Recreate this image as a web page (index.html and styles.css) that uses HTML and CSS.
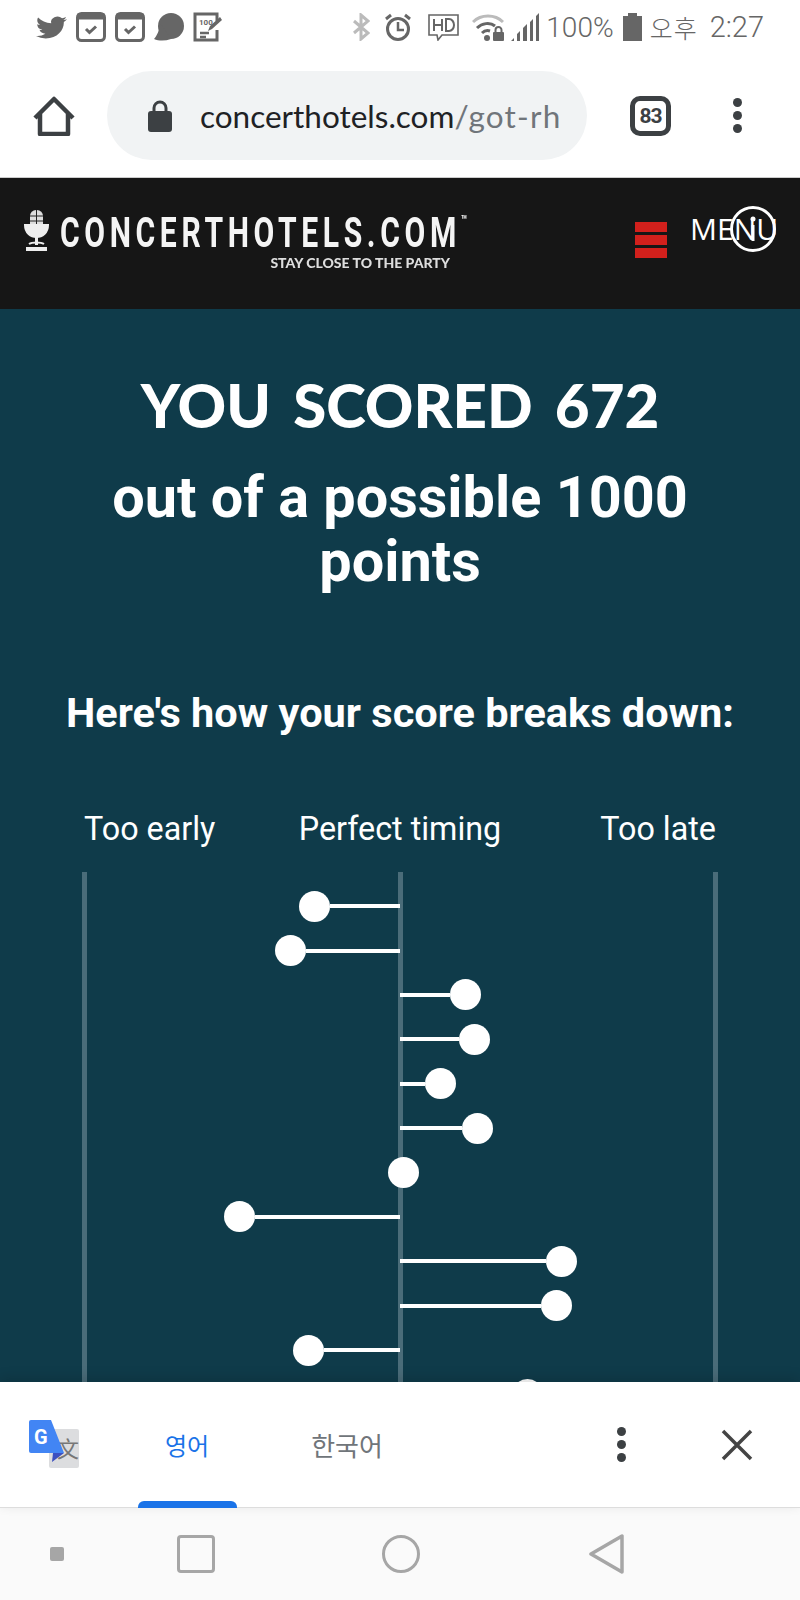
FILE: index.html

```html
<!DOCTYPE html>
<html lang="en">
<head>
  <meta charset="UTF-8" />
  <meta name="viewport" content="width=device-width, initial-scale=1.0" />
  <title>You scored 672</title>
  <link rel="stylesheet" href="styles.css">
</head>
<body>
  <div class="status-bar">
    <div class="status-left">
      <svg width="31" height="27" viewBox="0 0 24 24" preserveAspectRatio="none" fill="#666"><path d="M23.95 4.57a10 10 0 0 1-2.82.77 4.96 4.96 0 0 0 2.16-2.72c-.95.55-2 .96-3.12 1.19a4.92 4.92 0 0 0-8.38 4.48C7.69 8.1 4.07 6.13 1.64 3.16a4.82 4.82 0 0 0-.66 2.48c0 1.71.87 3.22 2.19 4.1a4.9 4.9 0 0 1-2.23-.61v.06a4.92 4.92 0 0 0 3.95 4.83 4.9 4.9 0 0 1-2.21.08 4.93 4.93 0 0 0 4.6 3.42A9.87 9.87 0 0 1 0 19.54a13.94 13.94 0 0 0 7.55 2.21c9.05 0 14-7.5 14-13.98 0-.21 0-.42-.02-.63a9.94 9.94 0 0 0 2.46-2.55z"/></svg>
      <svg width="30" height="30" viewBox="0 0 30 30"><rect x="1.5" y="1.5" width="27" height="27" rx="4" fill="#fff" stroke="#666" stroke-width="3"/><rect x="1.5" y="1.5" width="27" height="6" fill="#666"/><path d="M10 17l3.5 3.5 6.5-6" fill="none" stroke="#666" stroke-width="3"/></svg>
      <svg width="30" height="30" viewBox="0 0 30 30"><rect x="1.5" y="1.5" width="27" height="27" rx="4" fill="#fff" stroke="#666" stroke-width="3"/><rect x="1.5" y="1.5" width="27" height="6" fill="#666"/><path d="M10 17l3.5 3.5 6.5-6" fill="none" stroke="#666" stroke-width="3"/></svg>
      <svg width="30" height="28" viewBox="0 0 30 28" fill="#666"><circle cx="17" cy="13" r="13"/><path d="M0 26c3-3 5-9 7-15l10 15c-6 2-12 2-17 0z"/></svg>
      <svg width="30" height="30" viewBox="0 0 30 30" fill="none" stroke="#666"><path d="M24 9V2H2v26h22V18" stroke-width="3"/><path d="M7 21h9M7 25h6" stroke-width="2.5"/><path d="M15 19l2-5 10-9 2 3-10 9z" fill="#666" stroke="none"/><text x="6" y="13" class="note-text">100</text></svg>
    </div>
    <div class="status-right">
      <svg class="ic-bt" width="17" height="28" viewBox="0 0 17 28" fill="none" stroke="#bbb" stroke-width="3"><path d="M1 8l14 12-7 6V2l7 6L1 20"/></svg>
      <svg class="ic-alarm" width="26" height="28" viewBox="0 0 26 28" fill="none" stroke="#666"><circle cx="13" cy="16" r="10.5" stroke-width="3"/><path d="M13 9v8h6" stroke-width="2.5"/><path d="M1 6l5-4M25 6l-5-4" stroke-width="3"/></svg>
      <svg class="ic-hd" width="31" height="27" viewBox="0 0 31 27" fill="none" stroke="#666" stroke-width="1.6"><path d="M1 1h29v20H14l-4 5-1-5H1z"/><path d="M6 5v12M6 11h8M14 5v12M18 5v12h3a5 6 0 0 0 0-12z" stroke-width="2"/></svg>
      <svg class="ic-wifi" width="32" height="28" viewBox="0 0 32 28" fill="none"><path d="M1 9c8-8 22-8 30 0" stroke="#bbb" stroke-width="3"/><path d="M5 15c5-5 13-6 18-2" stroke="#666" stroke-width="3"/><path d="M10 20c2-2 5-3 8-2" stroke="#666" stroke-width="3"/><circle cx="15" cy="25" r="3" fill="#666"/><rect x="21" y="19" width="11" height="9" rx="1" fill="#666"/><path d="M23.500 19v-2a3 3 0 0 1 6 0v2" stroke="#666" stroke-width="2"/></svg>
      <svg class="ic-signal" width="28" height="28" viewBox="0 0 28 28" fill="#666"><path d="M0 28l3-3v3zM6 28v-7l3-3v10zM12 28V15l4-4v17zM19 28V9l3-3v22zM25 28V3l3-3v28z"/></svg>
      <span class="batt-text">100%</span>
      <svg class="ic-batt" width="19" height="28" viewBox="0 0 19 28" fill="#666"><path d="M5 0h9v3h5v25H0V3h5z"/></svg>
      <span class="ampm">오후</span>
      <span class="clock">2:27</span>
    </div>
  </div>

  <div class="url-bar">
    <svg width="42" height="40" viewBox="0 0 42 40" fill="none" stroke="#3c4043" stroke-width="4.5" stroke-linejoin="round"><path d="M2 22L21 3l19 19"/><path d="M7 18v20h28V18"/></svg>
    <div class="url-pill">
      <svg width="24" height="32" viewBox="0 0 24 32"><path d="M6 13V8a6 6 0 0 1 12 0v5" fill="none" stroke="#3c4043" stroke-width="3"/><rect y="11" width="24" height="21" rx="3" fill="#3c4043"/></svg>
      <div class="url-text">concerthotels.com<span class="url-path">/got-rh</span></div>
    </div>
    <div class="tab-count">83</div>
    <div class="dots"><i></i><i></i><i></i></div>
  </div>

  <div class="site-header">
    <div class="logo">
      <svg width="27" height="43" viewBox="0 0 27 43" fill="none" stroke="#eee"><rect x="7" y="1" width="13" height="20" rx="6" fill="#ddd" stroke="none"/><path d="M7 7h13M7 12h13M13.500 1v18" stroke="#222" stroke-width="1"/><path d="M2 16c0 16 23 16 23 0z" fill="#eee" stroke-width="2"/><path d="M13.500 28v8" stroke-width="3"/><path d="M6 35c3-2 12-2 15 0" stroke-width="2"/><path d="M3 40h21" stroke-width="4"/></svg>
      <div class="logo-words">
        <div class="logo-name">CONCERTHOTELS.COM<sup class="logo-tm">™</sup></div>
        <div class="logo-tag">STAY CLOSE TO THE PARTY</div>
      </div>
    </div>
    <div class="nav-toggle">
      <div class="burger"><i></i><i></i><i></i></div>
      <div class="menu-word">MENU
        <svg class="menu-ring" width="48" height="48" viewBox="0 0 48 48" fill="none" stroke="#fff"><circle cx="24" cy="24" r="21.500" stroke-width="3"/><path d="M24 20v16" stroke-width="3"/><circle cx="24" cy="14" r="2.500" fill="#fff" stroke="none"/></svg>
      </div>
    </div>
  </div>

  <div class="results">
    <h1 class="score-title">YOU SCORED 672</h1>
    <h2 class="score-sub">out of a possible 1000 points</h2>
    <h3 class="breakdown">Here's how your score breaks down:</h3>
    <div class="chart-labels">
      <span>Too early</span>
      <span>Perfect timing</span>
      <span>Too late</span>
    </div>
    <div class="chart">
      <div class="row" style="margin-left:216.5px"><i class="dot"></i><i class="stem" style="width:70.5px"></i></div>
      <div class="row" style="margin-left:192.5px"><i class="dot"></i><i class="stem" style="width:94.5px"></i></div>
      <div class="row" style="margin-left:318px"><i class="stem" style="width:50px"></i><i class="dot"></i></div>
      <div class="row" style="margin-left:318px"><i class="stem" style="width:58.5px"></i><i class="dot"></i></div>
      <div class="row" style="margin-left:318px"><i class="stem" style="width:24.5px"></i><i class="dot"></i></div>
      <div class="row" style="margin-left:318px"><i class="stem" style="width:62px"></i><i class="dot"></i></div>
      <div class="row" style="margin-left:305.5px"><i class="dot"></i></div>
      <div class="row" style="margin-left:141.5px"><i class="dot"></i><i class="stem" style="width:145.5px"></i></div>
      <div class="row" style="margin-left:318px"><i class="stem" style="width:145.5px"></i><i class="dot"></i></div>
      <div class="row" style="margin-left:318px"><i class="stem" style="width:140.5px"></i><i class="dot"></i></div>
      <div class="row" style="margin-left:210.5px"><i class="dot"></i><i class="stem" style="width:76.5px"></i></div>
      <div class="row" style="margin-left:318px"><i class="stem" style="width:111.5px"></i><i class="dot"></i></div>
    </div>
  </div>

  <div class="translate-bar">
    <svg class="translate-logo" width="50" height="49" viewBox="0 0 50 49"><rect x="20" y="9" width="30" height="39" rx="2" fill="#dcdddf"/><text x="28" y="37" class="translate-zh">文</text><path d="M2 0h20l13 33H2a2 2 0 0 1-2-2V2a2 2 0 0 1 2-2z" fill="#4285f4"/><path d="M24 33h11l-12 9z" fill="#3b4fc0"/><text x="5" y="24" class="translate-g">G</text></svg>
    <div class="lang lang-on">영어</div>
    <div class="lang">한국어</div>
    <div class="dots dots-small"><i></i><i></i><i></i></div>
    <svg class="translate-close" width="32" height="32" viewBox="0 0 32 32" stroke="#444" stroke-width="3.500"><path d="M2 2l28 28M30 2L2 30"/></svg>
  </div>

  <div class="nav-bar">
    <i class="nav-dot"></i>
    <i class="nav-square"></i>
    <i class="nav-circle"></i>
    <svg width="36" height="40" viewBox="0 0 36 40" fill="none" stroke="#a6a6a6" stroke-width="3.500" stroke-linejoin="round"><path d="M33 2v36L2 20z"/></svg>
  </div>
</body>
</html>
```

FILE: styles.css

```css
* {
  box-sizing: border-box;
}
body {
  margin: 0;
  width: 800px;
  height: 1600px;
  overflow: hidden;
  display: flex;
  flex-direction: column;
  font-family: Roboto, sans-serif;
  background: #fff;
}
i {
  display: block;
}

/* phone status bar */
.status-bar {
  height: 54px;
  flex: none;
  display: flex;
  justify-content: space-between;
  align-items: center;
  padding: 0 36px;
  color: #666;
}
.status-left, .status-right {
  display: flex;
  align-items: center;
}
.status-left {
  gap: 9px;
}
.status-right {
  gap: 0;
  font-weight: 300;
}
.note-text {
  font: bold 8px Roboto, sans-serif;
  fill: #666;
  stroke: none;
}
.ic-alarm { margin-left: 15px; }
.ic-hd { margin-left: 17px; }
.ic-wifi { margin-left: 13px; }
.ic-signal { margin-left: 7px; }
.batt-text {
  margin-left: 7px;
  font-size: 28px;
  font-family: Roboto, sans-serif;
}
.ic-batt { margin-left: 9px; }
.ampm {
  margin-left: 8px;
  font-size: 25px;
  letter-spacing: 1px;
  font-family: "Noto Sans CJK KR", sans-serif;
}
.clock {
  margin-left: 12px;
  font-size: 29px;
}

/* browser toolbar */
.url-bar {
  height: 124px;
  flex: none;
  display: flex;
  align-items: center;
  padding: 0 0 0 33px;
  border-bottom: 1px solid #ccc;
}
.url-pill {
  width: 480px;
  height: 89px;
  margin-left: 32px;
  padding-left: 41px;
  border-radius: 45px;
  background: #f1f3f4;
  display: flex;
  align-items: center;
  overflow: hidden;
}
.url-text {
  margin-left: 28px;
  font-family: Lato, sans-serif;
  font-size: 31.5px;
  color: #202124;
  white-space: nowrap;
  width: 365px;
  overflow: hidden;
}
.url-path {
  color: #70757a;
  letter-spacing: 1.2px;
}
.tab-count {
  width: 41px;
  height: 40px;
  margin-left: 43px;
  border: 5px solid #3c4043;
  border-radius: 10px;
  text-align: center;
  font-size: 21px;
  font-weight: 700;
  line-height: 30px;
  color: #3c4043;
  letter-spacing: -1px;
}
.dots {
  margin-left: 62px;
  display: flex;
  flex-direction: column;
  gap: 4px;
}
.dots i {
  width: 9px;
  height: 9px;
  border-radius: 50%;
  background: #3c4043;
}

/* concerthotels header */
.site-header {
  height: 131px;
  flex: none;
  background: #161616;
  display: flex;
  justify-content: space-between;
  padding: 31px 0 0 23px;
}
.logo {
  display: flex;
  align-items: flex-start;
  gap: 10px;
}
.logo-words {
  width: 390px;
  display: flex;
  flex-direction: column;
  align-items: flex-end;
  filter: blur(0.4px);
}
.logo-name {
  align-self: flex-start;
  transform: scaleX(0.7);
  transform-origin: left top;
  margin-top: 3px;
  font-weight: 700;
  font-size: 43px;
  line-height: 40px;
  letter-spacing: 6.6px;
  color: #f4f4f4;
  white-space: nowrap;
}
.logo-tm {
  font-size: 14px;
  letter-spacing: 0;
  vertical-align: 22px;
  line-height: 0;
}
.logo-tag {
  margin-top: 4px;
  font-family: Lato, sans-serif;
  font-weight: 900;
  font-size: 14px;
  line-height: 14px;
  color: #ddd;
}
.nav-toggle {
  display: flex;
  align-items: flex-start;
  margin-right: 23px;
  gap: 23px;
}
.burger {
  margin-top: 13px;
  width: 32px;
  display: flex;
  flex-direction: column;
  gap: 3px;
}
.burger i {
  height: 10px;
  background: #d2201c;
}
.menu-word {
  position: relative;
  font-family: "Open Sans", sans-serif;
  font-size: 30px;
  line-height: 40px;
  color: #fff;
  width: 87px;
  white-space: nowrap;
}
.menu-ring {
  position: absolute;
  left: 39px;
  top: -4px;
}

/* results */
.results {
  flex: 1;
  min-height: 0;
  overflow: hidden;
  background: #0f3b4a;
  color: #fff;
  text-align: center;
}
.score-title {
  margin: 56px 0 0;
  font-family: Lato, sans-serif;
  font-weight: 900;
  font-size: 60px;
  line-height: 80px;
  word-spacing: 8px;
}
.score-sub {
  margin: 21px 80px 0;
  font-size: 57.6px;
  font-weight: 700;
  line-height: 64px;
}
.breakdown {
  margin: 94px 0 0;
  font-size: 41.5px;
  font-weight: 700;
  line-height: 50px;
}
.chart-labels {
  margin: 71px 84px 0;
  display: grid;
  grid-template-columns: 1fr auto 1fr;
  font-size: 32.3px;
  line-height: 40px;
  text-align: left;
}
.chart-labels span:last-child {
  justify-self: end;
}
.chart {
  margin: 23px 82px 0;
  height: 600px;
  padding-top: 12px;
  background:
    linear-gradient(#4a6c79, #4a6c79) left top / 5px 100% no-repeat,
    linear-gradient(#4a6c79, #4a6c79) center top / 5px 100% no-repeat,
    linear-gradient(#4a6c79, #4a6c79) right top / 5px 100% no-repeat;
}
.row {
  height: 44.4px;
  display: flex;
  align-items: center;
}
.stem {
  height: 4px;
  background: #fff;
}
.dot {
  width: 31px;
  height: 31px;
  flex: none;
  border-radius: 50%;
  background: #fff;
}

/* translate bar */
.translate-bar {
  height: 126px;
  flex: none;
  position: relative;
  display: flex;
  align-items: center;
  background: #fff;
  box-shadow: 0 -4px 12px rgba(0, 0, 0, 0.14);
  border-bottom: 1px solid #ddd;
}
.translate-logo {
  margin: 0 0 0 29px;
  flex: none;
}
.translate-zh {
  font: 22px "Noto Sans CJK SC", sans-serif;
  fill: #777;
}
.translate-g {
  font: bold 20px Roboto, sans-serif;
  fill: #fff;
}
.lang {
  font-family: "Noto Sans CJK KR", sans-serif;
  font-size: 26px;
  color: #70757a;
}
.lang-on {
  position: relative;
  margin-left: 86px;
  font-size: 24px;
  color: #1a73e8;
}
.lang-on::after {
  content: "";
  position: absolute;
  left: -27px;
  right: -28px;
  bottom: -46px;
  height: 7px;
  background: #1a73e8;
  border-radius: 6px 6px 0 0;
}
.lang-on + .lang {
  margin-left: 102px;
}
.dots-small {
  margin-left: 234px;
}
.translate-close {
  margin-left: 95px;
}

/* android nav bar */
.nav-bar {
  height: 92px;
  flex: none;
  display: flex;
  align-items: center;
  padding-left: 50px;
  background: #fafafa;
}
.nav-dot {
  width: 14px;
  height: 14px;
  border-radius: 2px;
  background: #a6a6a6;
}
.nav-square {
  width: 38px;
  height: 38px;
  margin-left: 113px;
  border: 3.5px solid #a6a6a6;
  border-radius: 4px;
}
.nav-circle {
  width: 38px;
  height: 38px;
  margin-left: 167px;
  border: 3.5px solid #a6a6a6;
  border-radius: 50%;
}
.nav-bar svg {
  margin-left: 169px;
}
```
